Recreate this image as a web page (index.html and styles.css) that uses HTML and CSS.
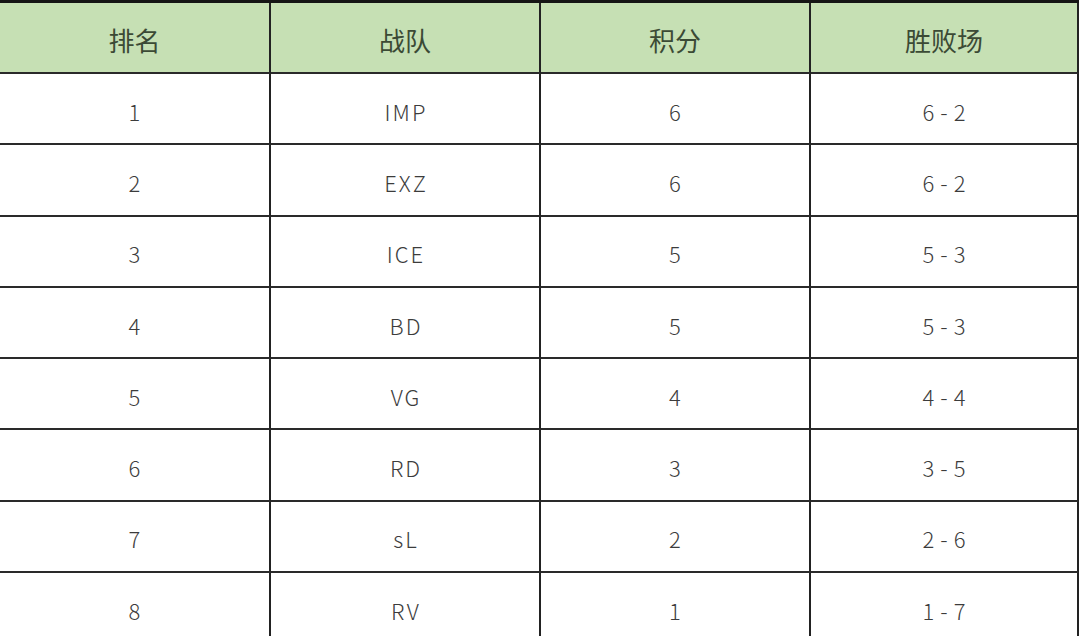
FILE: index.html
```html
<!DOCTYPE html>
<html lang="zh-CN">
<head>
<meta charset="utf-8">
<title>积分榜</title>
<link rel="stylesheet" href="styles.css">
</head>
<body>
<div class="table">
  <div class="cell head">排名</div><div class="cell head">战队</div><div class="cell head">积分</div><div class="cell head">胜败场</div>
  <div class="cell">1</div><div class="cell">IMP</div><div class="cell">6</div><div class="cell rec">6-2</div>
  <div class="cell">2</div><div class="cell">EXZ</div><div class="cell">6</div><div class="cell rec">6-2</div>
  <div class="cell">3</div><div class="cell">ICE</div><div class="cell">5</div><div class="cell rec">5-3</div>
  <div class="cell">4</div><div class="cell">BD</div><div class="cell">5</div><div class="cell rec">5-3</div>
  <div class="cell">5</div><div class="cell">VG</div><div class="cell">4</div><div class="cell rec">4-4</div>
  <div class="cell">6</div><div class="cell">RD</div><div class="cell">3</div><div class="cell rec">3-5</div>
  <div class="cell">7</div><div class="cell">sL</div><div class="cell">2</div><div class="cell rec">2-6</div>
  <div class="cell">8</div><div class="cell">RV</div><div class="cell">1</div><div class="cell rec">1-7</div>
</div>
</body>
</html>
```
FILE: styles.css
```css
html, body {
  margin: 0;
  padding: 0;
  background: #ffffff;
  overflow: hidden;
}
body {
  width: 1080px;
  height: 636px;
  font-family: "Noto Sans CJK SC", "Noto Sans", sans-serif;
}
.table {
  display: grid;
  grid-template-columns: 271px 270px 270px 268px;
  grid-template-rows: 71px repeat(8, 71.3px);
  width: 1079px;
  border-top: 3px solid #151515;
}
.cell {
  box-sizing: border-box;
  border-right: 2px solid #222222;
  border-bottom: 2px solid #2a2a2a;
  display: flex;
  align-items: center;
  justify-content: center;
  padding-top: 4px;
  font-size: 22px;
  font-weight: 300;
  letter-spacing: 2px;
  text-indent: 2px;
  color: #3c3c3c;
  background: #ffffff;
}
.rec {
  letter-spacing: 6px;
  text-indent: 6px;
}
.head {
  background: #c6e0b4;
  color: #3b4a35;
  font-size: 26px;
  font-weight: 400;
  letter-spacing: 0;
  text-indent: 0;
  padding-top: 3px;
}
```
